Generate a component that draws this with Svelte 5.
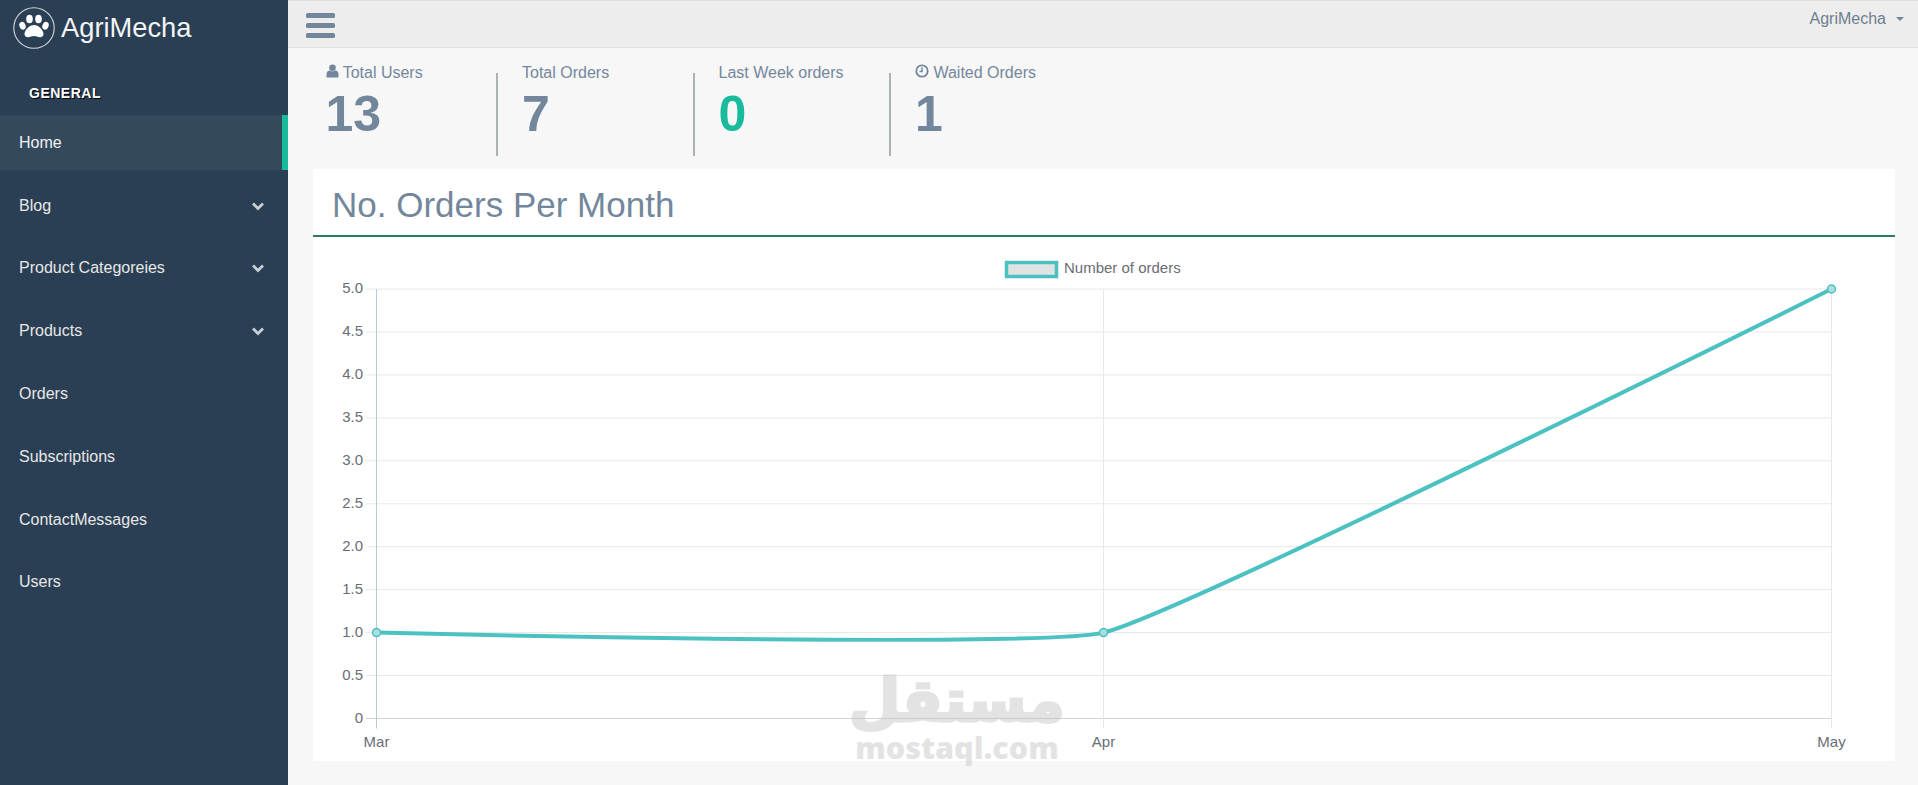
<script>
  const nav = [
    { label: 'Home', active: true },
    { label: 'Blog', sub: true },
    { label: 'Product Categoreies', sub: true },
    { label: 'Products', sub: true },
    { label: 'Orders' },
    { label: 'Subscriptions' },
    { label: 'ContactMessages' },
    { label: 'Users' }
  ];
  const stats = [
    { label: 'Total Users', value: '13', icon: 'user' },
    { label: 'Total Orders', value: '7' },
    { label: 'Last Week orders', value: '0', green: true },
    { label: 'Waited Orders', value: '1', icon: 'clock' }
  ];
  const ticks = ['5.0','4.5','4.0','3.5','3.0','2.5','2.0','1.5','1.0','0.5','0'];
  const xs = [376.5 - 313, 1103.5 - 313, 1831.5 - 313];
  const y5 = 289 - 237, y0 = 718.5 - 237;
  const yAt = i => y5 + i * (y0 - y5) / 10;
  const pts = [[xs[0], yAt(8)], [xs[1], yAt(8)], [xs[2], yAt(0)]];
  const linePath = `M${pts[0][0]} ${pts[0][1]} C${pts[0][0]} ${pts[0][1]} ${pts[1][0]-69} ${pts[1][1]+16.3} ${pts[1][0]} ${pts[1][1]} C${pts[1][0]+76.5} ${pts[1][1]-18} ${pts[2][0]} ${pts[2][1]} ${pts[2][0]} ${pts[2][1]}`;
  const labels = ['Mar','Apr','May'];
</script>

<div class="layout">
  <aside class="sidebar">
    <div class="brand">
      <span class="logo">
        <svg width="42" height="42" viewBox="0 0 42 42">
          <circle cx="21" cy="21" r="20.2" fill="none" stroke="#d5d9dd" stroke-width="1.1"/>
          <g fill="#fff">
            <ellipse cx="16.5" cy="12" rx="3.3" ry="4.300"/>
            <ellipse cx="25.5" cy="12" rx="3.3" ry="4.300"/>
            <ellipse cx="9.500" cy="18.800" rx="3.100" ry="4" transform="rotate(-20 9.500 18.800)"/>
            <ellipse cx="32.500" cy="18.800" rx="3.100" ry="4" transform="rotate(20 32.500 18.800)"/>
            <path d="M21 18c-4.500 0-9.500 5-9.500 9c0 2.400 1.800 3.200 3.500 3.200c2.200 0 3.900-1.200 6-1.200s3.800 1.200 6 1.200c1.700 0 3.500-.8 3.500-3.200c0-4-5-9-9.500-9z"/>
          </g>
        </svg>
      </span>
      <span class="brand-name">AgriMecha</span>
    </div>
    <h3 class="section">GENERAL</h3>
    <nav class="menu">
      {#each nav as item}
        <a class="item" class:active={item.active} href="#top">
          <span>{item.label}</span>
          {#if item.sub}
            <svg class="chev" width="14" height="10" viewBox="0 0 14 10"><path d="M2 2.500l5 5 5-5" fill="none" stroke="#c9ced3" stroke-width="2.800"/></svg>
          {/if}
        </a>
      {/each}
    </nav>
  </aside>

  <main class="main">
    <header class="topbar">
      <button class="burger" aria-label="menu"><i></i><i></i><i></i></button>
      <div class="user">AgriMecha <span class="caret"></span></div>
    </header>

    <section class="stats">
      {#each stats as s}
        <div class="stat">
          <div class="stat-label">
            {#if s.icon === 'user'}
              <svg width="13" height="14" viewBox="0 0 13 14"><circle cx="6.500" cy="3.800" r="3.300" fill="#73879c"/><path d="M.5 13.500v-3.200c0-2.300 1.500-3.600 3-3.800 1 .9 4.800 .9 6 0 1.500 .2 3 1.500 3 3.800v3.200z" fill="#73879c"/></svg>
            {:else if s.icon === 'clock'}
              <svg width="14" height="14" viewBox="0 0 14 14"><circle cx="7" cy="7" r="5.700" fill="none" stroke="#73879c" stroke-width="1.800"/><path d="M7 3.500v4H4.500" fill="none" stroke="#73879c" stroke-width="1.500"/></svg>
            {/if}
            {s.label}
          </div>
          <div class="stat-value" class:green={s.green}>{s.value}</div>
        </div>
      {/each}
    </section>

    <section class="card">
      <h2 class="card-title">No. Orders Per Month</h2>
      <svg class="chart" width="1582" height="524" viewBox="0 0 1582 524">
        <rect x="693.500" y="25.500" width="50" height="14" fill="#e0e3e3" stroke="#4bc0c0" stroke-width="3.500"/>
        <text x="751" y="36" class="tick">Number of orders</text>

        {#each ticks as t, i}
          <line x1="53" x2={xs[2]} y1={yAt(i)} y2={yAt(i)} class:base={i === 10} class="grid"/>
          <text x="50" y={yAt(i) + 4} text-anchor="end" class="tick">{t}</text>
        {/each}
        {#each xs as x, i}
          <line x1={x} x2={x} y1={y5} y2={y0 + 10} class="grid" class:axis={i === 0}/>
          <text x={x} y={y0 + 28} text-anchor="middle" class="tick">{labels[i]}</text>
        {/each}
        <path d={linePath} fill="none" stroke="#4cc1c2" stroke-width="4"/>
        {#each pts as p}
          <circle cx={p[0]} cy={p[1]} r="4" fill="#a9dede" stroke="#4bc0c0" stroke-width="1.500"/>
        {/each}
      </svg>
    </section>
  </main>

  <div class="watermark" aria-hidden="true">
    <div class="wm-ar" dir="rtl">مستقل</div>
    <div class="wm-en">mostaql.com</div>
  </div>
</div>

<style>
  :global(body) {
    margin: 0;
    background: #f7f7f7;
    font-family: "Liberation Sans", Arial, sans-serif;
    color: #73879c;
  }
  .layout {
    display: flex;
    position: relative;
    height: 785px;
    overflow: hidden;
  }
  .sidebar {
    width: 288px;
    flex: none;
    background: #2a3f54;
    color: #e7e7e7;
  }
  .brand {
    height: 57px;
    display: flex;
    align-items: center;
    padding-left: 13px;
    gap: 6px;
    margin-top: -1px;
  }
  .logo { display: flex; }
  .brand-name {
    font-size: 27.300px;
    color: #f2f4f5;
  }
  .section {
    margin: 0;
    padding: 28px 0 0 29px;
    height: 31.300px;
    font-size: 14px;
    line-height: 18px;
    letter-spacing: .5px;
    font-weight: 700;
    color: #fff;
    text-shadow: 1px 1px #000;
  }
  .menu {
    display: flex;
    flex-direction: column;
    gap: 7.800px;
  }
  .item {
    height: 55px;
    display: flex;
    align-items: center;
    justify-content: space-between;
    padding: 0 23px 0 19px;
    font-size: 16px;
    color: #e7e7e7;
    text-decoration: none;
    box-sizing: border-box;
  }
  .item.active {
    background: #35495d;
    color: #f2f2f2;
    border-right: 6px solid #1abb9c;
    padding-right: 17px;
  }
  .main {
    flex: 1;
    min-width: 0;
    display: flex;
    flex-direction: column;
  }
  .topbar {
    height: 48px;
    box-sizing: border-box;
    background: #ededed;
    border-top: 1px solid #dcdcdc;
    border-bottom: 1px solid #dfe2e5;
    display: flex;
    justify-content: space-between;
    align-items: flex-start;
    padding: 0 14px 0 18px;
    flex: none;
  }
  .burger {
    margin-top: 12px;
    width: 29px;
    padding: 0;
    border: 0;
    background: none;
    display: flex;
    flex-direction: column;
    gap: 5px;
  }
  .burger i {
    display: block;
    height: 5px;
    border-radius: 1.500px;
    background: #73879c;
  }
  .user {
    margin-top: 8px;
    font-size: 16px;
    line-height: 20px;
    color: #6f7f8f;
    display: flex;
    align-items: center;
    gap: 10px;
  }
  .caret {
    width: 0;
    height: 0;
    border-left: 4px solid transparent;
    border-right: 4px solid transparent;
    border-top: 4px solid #73879c;
  }
  .stats {
    display: flex;
    padding: 25px 0 0 35.500px;
    height: 96px;
    flex: none;
  }
  .stat {
    width: 196.500px;
    box-sizing: border-box;
    height: 83px;
    border-left: 2px solid #adb2b5;
    padding-left: 24px;
    margin-left: -24px;
    margin-right: 24px;
  }
  .stat:first-child {
    border-left: 2px solid transparent;
  }
  .stat-label {
    font-size: 16px;
    line-height: 18px;
    margin-top: -9px;
    white-space: nowrap;
  }
  .stat-value {
    font-size: 50px;
    font-weight: 700;
    line-height: 52px;
    margin-top: 6px;
  }
  .stat-value.green { color: #1abb9c; }
  .card {
    margin: 0 23px 0 25px;
    background: #fff;
    height: 592px;
    flex: none;
  }
  .card-title {
    margin: 0;
    height: 68px;
    box-sizing: border-box;
    font-size: 35px;
    font-weight: 400;
    line-height: 38px;
    padding: 17px 0 0 19px;
    color: #73879c;
    border-bottom: 2px solid #2e7d60;
  }
  .chart { display: block; }
  .grid {
    stroke: #e8e8e8;
    stroke-width: 1;
  }
  .grid.base { stroke: #d4d4d4; }
  .grid.axis { stroke: #b4cfcf; }
  .tick {
    font-family: "Liberation Sans", Arial, sans-serif;
    font-size: 15px;
    fill: #6a6d75;
  }
  .watermark {
    position: absolute;
    left: 847px;
    top: 672px;
    width: 220px;
    text-align: center;
    color: #bebebe;
    opacity: .42;
    pointer-events: none;
  }
  .wm-ar {
    font-family: "DejaVu Sans", sans-serif;
    font-weight: 700;
    font-size: 59px;
    line-height: 58px;
    white-space: nowrap;
    -webkit-text-stroke: 3px #bebebe;
  }
  .wm-en {
    font-family: "Open Sans", sans-serif;
    font-weight: 800;
    font-size: 30.500px;
    line-height: 34px;
    white-space: nowrap;
  }
</style>
